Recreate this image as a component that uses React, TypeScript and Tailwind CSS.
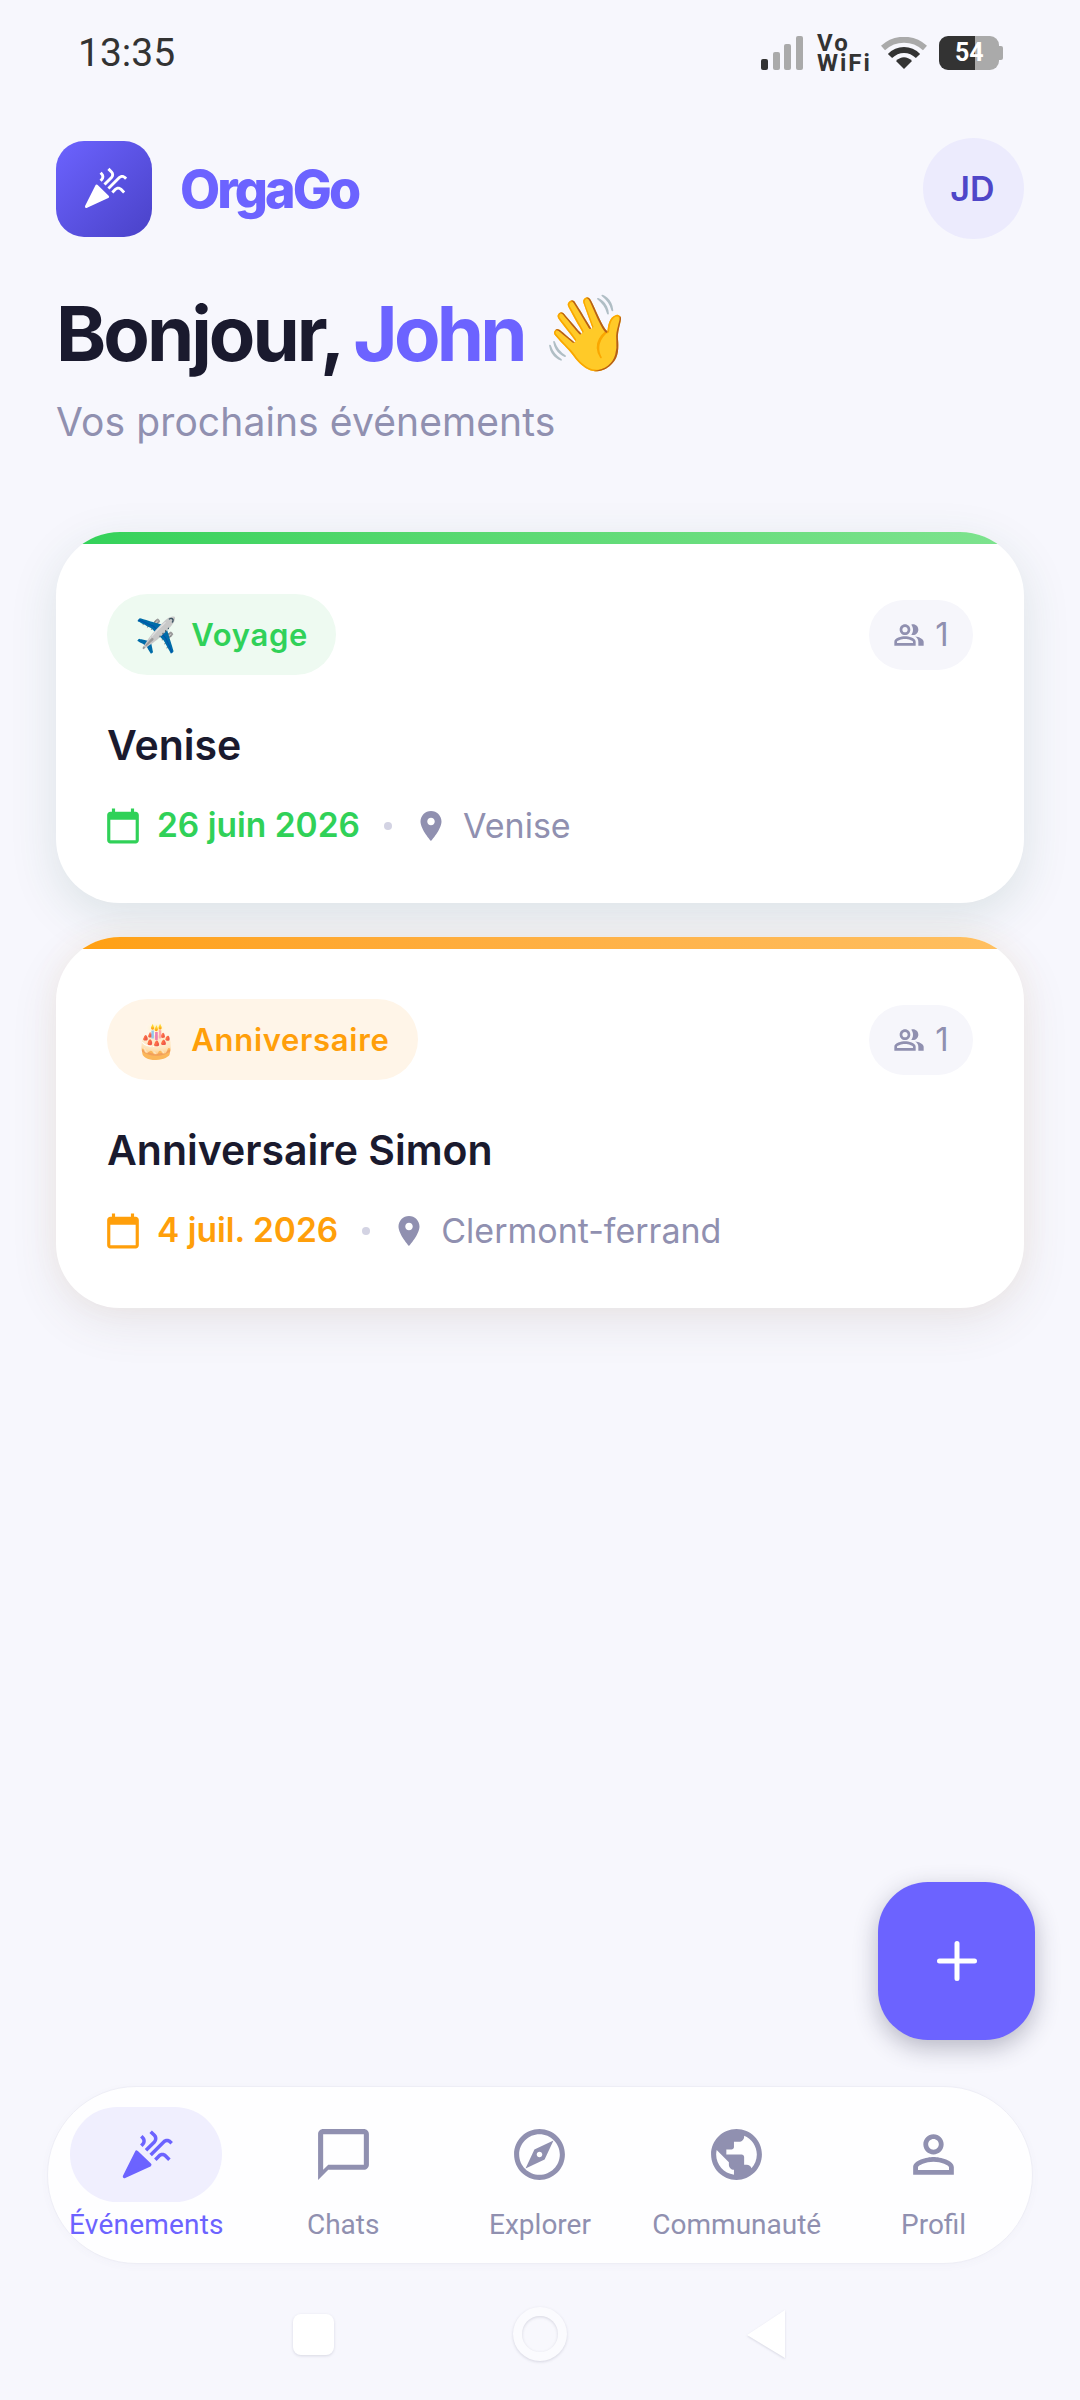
import React from "react";

const Celebration = ({ className }: { className?: string }) => (
  <svg viewBox="0 0 24 24" fill="currentColor" className={className}>
    <path d="M2.8 21.2L8 10.8 13.6 16.2z" stroke="currentColor" strokeWidth="1.5" strokeLinejoin="round" />
    <path d="M14.53 12.53l5.59-5.59c.49-.49 1.28-.49 1.77 0l.59.59 1.06-1.06-.59-.59c-1.07-1.07-2.82-1.07-3.89 0l-5.59 5.59 1.06 1.06z" />
    <path d="M10.06 6.88l-.59.59 1.06 1.06.59-.59c1.07-1.07 1.07-2.82 0-3.89l-.59-.59-1.06 1.07.59.59c.48.48.48 1.28 0 1.76z" />
    <path d="M17.06 11.88l-1.59 1.59 1.06 1.06 1.59-1.59c.49-.49 1.28-.49 1.77 0l1.61 1.61 1.06-1.06-1.61-1.61c-1.08-1.07-2.82-1.07-3.89 0z" />
    <path d="M15.06 5.88l-3.59 3.59 1.06 1.06 3.59-3.59c1.07-1.07 1.07-2.82 0-3.89l-1.59-1.59-1.06 1.06 1.59 1.59c.48.49.48 1.29 0 1.77z" />
  </svg>
);

const MIcon = ({ d, className }: { d: string; className?: string }) => (
  <svg viewBox="0 0 24 24" fill="currentColor" className={className}>
    <path d={d} />
  </svg>
);

const CHAT = "M20 2H4c-1.1 0-2 .9-2 2v18l4-4h14c1.1 0 2-.9 2-2V4c0-1.1-.9-2-2-2zm0 14H6l-2 2V4h16v12z";
const EXPLORE = "M12 2C6.48 2 2 6.48 2 12s4.48 10 10 10 10-4.48 10-10S17.52 2 12 2zm0 18c-4.41 0-8-3.59-8-8s3.59-8 8-8 8 3.59 8 8-3.59 8-8 8zm-5.5-2.5l7.51-3.49L17.5 6.5 9.99 9.99 6.5 17.5zm5.5-6.6c.61 0 1.1.49 1.1 1.1s-.49 1.1-1.1 1.1-1.1-.49-1.1-1.1.49-1.1 1.1-1.1z";
const PUBLIC = "M12 2C6.48 2 2 6.48 2 12s4.48 10 10 10 10-4.48 10-10S17.52 2 12 2zm-1 17.93c-3.95-.49-7-3.85-7-7.93 0-.62.08-1.21.21-1.79L9 15v1c0 1.1.9 2 2 2v1.93zm6.9-2.54c-.26-.81-1-1.39-1.9-1.39h-1v-3c0-.55-.45-1-1-1H8v-2h2c.55 0 1-.45 1-1V7h2c1.1 0 2-.9 2-2v-.41c2.93 1.19 5 4.06 5 7.41 0 2.08-.8 3.97-2.1 5.39z";
const PERSON = "M12 5.9c1.16 0 2.1.94 2.1 2.1s-.94 2.1-2.1 2.1S9.9 9.16 9.9 8s.94-2.1 2.1-2.1m0 9c2.97 0 6.1 1.46 6.1 2.1v1.1H5.9V17c0-.64 3.13-2.1 6.1-2.1M12 4C9.79 4 8 5.79 8 8s1.79 4 4 4 4-1.79 4-4-1.79-4-4-4zm0 9c-2.67 0-8 1.34-8 4v3h16v-3c0-2.66-5.33-4-8-4z";
const CALENDAR = "M20 3h-1V1h-2v2H7V1H5v2H4c-1.1 0-2 .9-2 2v16c0 1.1.9 2 2 2h16c1.1 0 2-.9 2-2V5c0-1.1-.9-2-2-2zm0 18H4V8h16v13z";
const PLACE = "M12 2C8.13 2 5 5.13 5 9c0 5.25 7 13 7 13s7-7.75 7-13c0-3.87-3.13-7-7-7zm0 9.5c-1.38 0-2.5-1.12-2.5-2.5s1.12-2.5 2.5-2.5 2.5 1.12 2.5 2.5-1.12 2.5-2.5 2.5z";
const PEOPLE = "M16.67 13.13C18.04 14.06 19 15.32 19 17v3h4v-3c0-2.18-3.57-3.47-6.33-3.87zM15 12c2.21 0 4-1.79 4-4s-1.79-4-4-4c-.47 0-.91.1-1.33.24C14.5 5.27 15 6.58 15 8s-.5 2.73-1.33 3.76c.42.14.86.24 1.33.24zM9 12c2.21 0 4-1.79 4-4s-1.79-4-4-4-4 1.79-4 4 1.79 4 4 4zm0-6c1.1 0 2 .9 2 2s-.9 2-2 2-2-.9-2-2 .9-2 2-2zM9 13c-2.67 0-8 1.34-8 4v3h16v-3c0-2.66-5.33-4-8-4zm6 5H3v-.99C3.2 16.29 6.3 15 9 15s5.8 1.29 6 2v1z";

const StatusBar = () => (
  <div className="flex h-[106px] items-center justify-between pl-[78px] pr-[77px] font-['Roboto',sans-serif] text-[#333333]">
    <span className="text-[39px] leading-none">13:35</span>
    <div className="flex items-center">
      <svg viewBox="0 0 42 34" className="h-[34px] w-[42px]">
        <rect x="0" y="23" width="7" height="11" rx="2" fill="#333333" />
        <rect x="12" y="16" width="7" height="18" rx="2" fill="#aaaaaa" />
        <rect x="23" y="8" width="7" height="26" rx="2" fill="#aaaaaa" />
        <rect x="35" y="0" width="7" height="34" rx="2" fill="#aaaaaa" />
      </svg>
      <div className="ml-[14px] flex w-[54px] flex-col text-[24px] font-bold leading-[20px] tracking-[2px]">
        <span>Vo</span>
        <span>WiFi</span>
      </div>
      <svg viewBox="0 0 46 32" className="ml-[10px] h-[32px] w-[46px]">
        <path d="M2 11 C14 0 32 0 44 11" fill="none" stroke="#aaaaaa" strokeWidth="6" />
        <path d="M9 19 C17 11 29 11 37 19" fill="none" stroke="#333333" strokeWidth="6" />
        <path d="M15 24 C20 19 26 19 31 24 L23 32 Z" fill="#333333" />
      </svg>
      <div className="relative ml-[12px] flex h-[34px] w-[64px]">
        <div className="h-full w-[36px] rounded-l-[9px] bg-[#333333]" />
        <div className="h-full w-[24px] rounded-r-[9px] bg-[#aaaaaa]" />
        <div className="my-auto h-[14px] w-[4px] rounded-r-[2px] bg-[#aaaaaa]" />
        <span className="absolute left-[16px] top-0 text-[25px] font-bold leading-[34px] text-white">54</span>
      </div>
    </div>
  </div>
);

const Header = () => (
  <div className="mx-[56px] mt-[32px] flex items-center justify-between">
    <div className="flex items-center gap-[28px]">
      <div className="flex h-[96px] w-[96px] items-center justify-center rounded-[28px] bg-gradient-to-br from-[#6c63ff] to-[#4a42c8]">
        <Celebration className="h-[47px] w-[47px] text-white" />
      </div>
      <span className="pt-[2px] text-[52px] font-extrabold leading-none tracking-[-2.9px] text-[#6c63ff]">OrgaGo</span>
    </div>
    <div className="flex h-[101px] w-[101px] items-center justify-center rounded-full bg-[#ecebfd] pr-[2px] text-[34px] font-semibold text-[#4f46c8]">
      JD
    </div>
  </div>
);

type Event = {
  emoji: string;
  kind: string;
  title: string;
  date: string;
  place: string;
  text: string;
  bar: string;
  pill: string;
  shadow: string;
};

const EventCard = ({ e }: { e: Event }) => (
  <div className={`flex h-[371px] flex-col overflow-hidden rounded-[64px] bg-white ${e.shadow}`}>
    <div className={`h-[12px] w-full shrink-0 ${e.bar}`} />
    <div className="flex flex-col px-[51px] pt-[50px]">
      <div className="flex items-center justify-between">
        <div className={`flex h-[81px] items-center gap-[14px] rounded-full pl-[28px] pr-[28px] ${e.pill}`}>
          <span className="font-['Noto_Color_Emoji',sans-serif] text-[34px] leading-none">{e.emoji}</span>
          <span className={`pt-[1px] text-[31px] font-semibold tracking-[0.7px] ${e.text}`}>{e.kind}</span>
        </div>
        <div className="flex h-[70px] w-[104px] items-center justify-center gap-[10px] rounded-full bg-[#f6f6fb] text-[#9090b0]">
          <MIcon d={PEOPLE} className="h-[32px] w-[32px]" />
          <span className="text-[33px] leading-none">1</span>
        </div>
      </div>
      <div className="mt-[46px] text-[41px] font-semibold leading-[48px] text-[#1a1a2e]">{e.title}</div>
      <div className="mt-[35px] flex h-[44px] items-center">
        <MIcon d={CALENDAR} className={`h-[38px] w-[38px] -ml-[3px] ${e.text}`} />
        <span className={`ml-[15px] text-[33.5px] font-semibold leading-none ${e.text}`}>{e.date}</span>
        <span className="ml-[24px] h-[8px] w-[8px] rounded-full bg-[#d3d3e3]" />
        <MIcon d={PLACE} className="ml-[21px] h-[36px] w-[36px] text-[#9090b0]" />
        <span className="ml-[14px] text-[34px] leading-none text-[#9090b0]">{e.place}</span>
      </div>
    </div>
  </div>
);

const events: Event[] = [
  {
    emoji: "✈️",
    kind: "Voyage",
    title: "Venise",
    date: "26 juin 2026",
    place: "Venise",
    text: "text-[#30d158]",
    bar: "bg-gradient-to-r from-[#30d158] to-[#7ee38f]",
    pill: "bg-[#eefaf1]",
    shadow: "shadow-[0_14px_48px_rgba(40,90,70,0.13)]",
  },
  {
    emoji: "🎂",
    kind: "Anniversaire",
    title: "Anniversaire Simon",
    date: "4 juil. 2026",
    place: "Clermont-ferrand",
    text: "text-[#ff9f0a]",
    bar: "bg-gradient-to-r from-[#ff9f0a] to-[#ffc062]",
    pill: "bg-[#fff5e8]",
    shadow: "shadow-[0_14px_48px_rgba(100,85,60,0.11),0_-4px_30px_rgba(255,160,10,0.05)]",
  },
];

const tabs = [
  { label: "Chats", d: CHAT },
  { label: "Explorer", d: EXPLORE },
  { label: "Communauté", d: PUBLIC },
  { label: "Profil", d: PERSON },
];

const BottomNav = () => (
  <nav className="mx-[47px] mt-auto grid h-[178px] grid-cols-5 rounded-[89px] border border-[#eeeef6] bg-[#fefeff] pt-[20px] font-['Roboto',sans-serif] shadow-[0_2px_8px_rgba(90,90,140,0.03)]">
    <div className="flex flex-col items-center">
      <div className="flex h-[95px] w-[152px] items-center justify-center rounded-full bg-[#f0effe] text-[#6c63ff]">
        <Celebration className="h-[56px] w-[56px]" />
      </div>
      <span className="mt-[6px] whitespace-nowrap text-[28px] leading-[34px] tracking-[0.2px] text-[#6c63ff]">Événements</span>
    </div>
    {tabs.map((t) => (
      <div key={t.label} className="flex flex-col items-center text-[#9090b0]">
        <div className="flex h-[95px] items-center justify-center">
          <MIcon d={t.d} className="h-[61px] w-[61px]" />
        </div>
        <span className="mt-[6px] whitespace-nowrap text-[28px] leading-[34px]">{t.label}</span>
      </div>
    ))}
  </nav>
);

const SystemNav = () => (
  <div className="flex h-[136px] items-center gap-[179px] pl-[293px] pt-[4px]">
    <div className="h-[41px] w-[41px] rounded-[8px] bg-white shadow-[0_1px_3px_rgba(80,80,110,0.18)]" />
    <div className="flex h-[54px] w-[54px] items-center justify-center rounded-full bg-[#fbfbfe] shadow-[0_1px_3px_rgba(80,80,110,0.2)]">
      <div className="h-[36px] w-[36px] rounded-full bg-[#f8f8fd] shadow-[inset_0_1px_3px_rgba(80,80,110,0.2)]" />
    </div>
    <svg viewBox="0 0 40 50" className="h-[50px] w-[40px] drop-shadow-[0_1px_1px_rgba(80,80,110,0.18)]">
      <path d="M39 1 L39 49 L1 26 Z" fill="#ffffff" strokeLinejoin="round" />
    </svg>
  </div>
);

export default function App() {
  return (
    <div className="relative flex h-[2400px] w-[1080px] flex-col overflow-hidden bg-[#f7f7fd] font-['Inter',sans-serif]">
      <StatusBar />
      <Header />
      <div className="mx-[56px] mt-[44px] flex h-[100px] items-center text-[76px] font-bold leading-none tracking-[-3px] text-[#1a1a2e]">
        <span>Bonjour,</span>
        <span className="ml-[11px] tracking-[-3.8px] text-[#6c63ff]">John</span>
        <span className="ml-[18px] pt-[2px] font-['Noto_Color_Emoji',sans-serif] text-[74px] tracking-normal">👋</span>
      </div>
      <p className="mx-[56px] mt-[16px] text-[39px] leading-[46px] tracking-[0.1px] text-[#9090b0]">Vos prochains événements</p>
      <div className="mx-[56px] mt-[87px] flex flex-col gap-[34px]">
        {events.map((e) => (
          <EventCard key={e.title} e={e} />
        ))}
      </div>
      <BottomNav />
      <SystemNav />
      <button className="absolute left-[878px] top-[1882px] flex h-[158px] w-[157px] items-center justify-center rounded-[50px] bg-[#6c63ff] shadow-[0_8px_24px_rgba(50,50,80,0.32)]">
        <svg viewBox="0 0 40 40" className="h-[40px] w-[40px]">
          <path d="M20 2.5V37.5M2.5 20H37.5" stroke="#ffffff" strokeWidth="5" strokeLinecap="round" />
        </svg>
      </button>
    </div>
  );
}
